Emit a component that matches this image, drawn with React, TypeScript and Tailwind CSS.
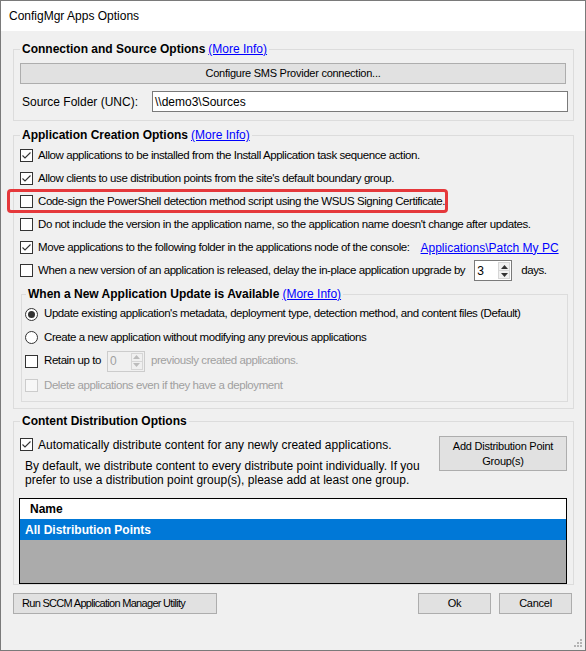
import React from 'react'

// condensed look of the WinForms checkbox / radio captions
const NARROW = 'text-[11.5px] tracking-[-0.42px]'
const BTN_TEXT = 'text-[11px] tracking-[-0.25px]'
const BTN = 'flex items-center justify-center border border-[#adadad] bg-[#e1e1e1] text-black'

function Check({ checked = false, disabled = false }: { checked?: boolean; disabled?: boolean }) {
  return (
    <span
      className={`flex h-[13px] w-[13px] shrink-0 items-center justify-center border ${
        disabled ? 'border-[#cccccc] bg-[#f7f7f7]' : 'border-[#333333] bg-white'
      }`}
    >
      {checked && (
        <svg width="11" height="11" viewBox="0 0 11 11">
          <path d="M1.5 5.5 L4 8 L9.5 2.5" fill="none" stroke="#333333" strokeWidth="1.1" />
        </svg>
      )}
    </span>
  )
}

function Radio({ checked = false }: { checked?: boolean }) {
  return (
    <span className="flex h-[13px] w-[13px] shrink-0 items-center justify-center rounded-full border border-[#333333] bg-white">
      {checked && <span className="h-[7px] w-[7px] rounded-full bg-[#333333]" />}
    </span>
  )
}

function Spin({ value, disabled = false }: { value: string; disabled?: boolean }) {
  const arrow = disabled ? '#bcbcbc' : '#333333'
  return (
    <div
      className={`flex h-[21px] w-[38px] shrink-0 border ${
        disabled ? 'border-[#cccccc] bg-[#f0f0f0] text-[#a0a0a0]' : 'border-[#7a7a7a] bg-white text-black'
      }`}
    >
      <span className="flex flex-1 items-center pl-[2px] text-[12px]">{value}</span>
      <div className="my-[1px] mr-[1px] flex w-[12px] flex-col border border-[#d6d6d6] bg-[#f0f0f0]">
        <span className="flex flex-1 items-center justify-center border-b border-[#d6d6d6]">
          <svg width="7" height="4" viewBox="0 0 7 4">
            <path d="M0 4 L3.5 0 L7 4 Z" fill={arrow} />
          </svg>
        </span>
        <span className="flex flex-1 items-center justify-center">
          <svg width="7" height="4" viewBox="0 0 7 4">
            <path d="M0 0 L7 0 L3.5 4 Z" fill={arrow} />
          </svg>
        </span>
      </div>
    </div>
  )
}

function MoreInfo() {
  return <span className="ml-[3px] font-normal text-[#0000ff] underline">(More Info)</span>
}

function CheckRow({ checked, children }: { checked?: boolean; children: React.ReactNode }) {
  return (
    <div className="flex h-[23px] items-center gap-[5px] whitespace-nowrap pl-[6px]">
      <Check checked={checked} />
      <span className={NARROW}>{children}</span>
    </div>
  )
}

export default function App() {
  return (
    <div className="relative flex h-[651px] w-[586px] flex-col overflow-hidden border border-[#7a7a7a] bg-[#f0f0f0] font-['Liberation_Sans',Arial,sans-serif] text-[12px] text-black">
      {/* title bar */}
      <div className="flex h-[30px] shrink-0 items-center bg-white pl-[8px] text-[12px]">ConfigMgr Apps Options</div>

      <div className="flex flex-col pt-[10px]">
        {/* Connection and Source Options */}
        <fieldset className="ml-[12px] w-[561px] min-w-0 border border-[#dcdcdc] px-0 pb-[8px]">
          <legend className="ml-[6px] px-[2px] text-[12px] leading-[16px] font-bold">
            Connection and Source Options
            <MoreInfo />
          </legend>
          <div className={`${BTN} ${BTN_TEXT} mt-[6px] ml-[6px] h-[21px] w-[546px]`}>Configure SMS Provider connection...</div>
          <div className="mt-[7px] flex h-[21px] items-center">
            <span className="pl-[8px]">Source Folder (UNC):</span>
            <div className="mr-[5px] ml-auto flex h-[21px] w-[416px] items-center border border-[#7a7a7a] bg-white pl-[2px]">
              {'\\\\demo3\\Sources'}
            </div>
          </div>
        </fieldset>

        {/* Application Creation Options */}
        <fieldset className="mt-[6px] ml-[12px] w-[561px] min-w-0 border border-[#dcdcdc] px-0 pb-[6px]">
          <legend className="ml-[6px] px-[2px] text-[12px] leading-[16px] font-bold">
            Application Creation Options
            <MoreInfo />
          </legend>
          <div className="mt-[1px] flex flex-col">
            <CheckRow checked>Allow applications to be installed from the Install Application task sequence action.</CheckRow>
            <CheckRow checked>Allow clients to use distribution points from the site's default boundary group.</CheckRow>
            <div className="relative">
              <CheckRow>Code-sign the PowerShell detection method script using the WSUS Signing Certificate.</CheckRow>
              <span className="absolute top-[-1px] left-[-7px] h-[24px] w-[441px] rounded-[4px] border-[3px] border-[#e5383b]" />
            </div>
            <CheckRow>Do not include the version in the application name, so the application name doesn't change after updates.</CheckRow>
            <div className="flex h-[23px] items-center gap-[5px] whitespace-nowrap pl-[6px]">
              <Check checked />
              <span className={NARROW}>Move applications to the following folder in the applications node of the console:</span>
              <span className="ml-[6px] text-[#0000ff] underline">Applications\Patch My PC</span>
            </div>
            <div className="flex h-[23px] items-center gap-[5px] whitespace-nowrap pl-[6px]">
              <Check />
              <span className={NARROW}>When a new version of an application is released, delay the in-place application upgrade by</span>
              <span className="ml-[4px]">
                <Spin value="3" />
              </span>
              <span className={`${NARROW} ml-[4px]`}>days.</span>
            </div>
          </div>

          {/* When a New Application Update is Available */}
          <fieldset className="mt-[4px] ml-[7px] w-[547px] min-w-0 border border-[#dcdcdc] px-0 pb-[3px]">
            <legend className="ml-[4px] px-[2px] text-[12px] leading-[16px] font-bold">
              When a New Application Update is Available
              <MoreInfo />
            </legend>
            <div className="flex h-[24px] items-center gap-[6px] whitespace-nowrap pl-[3px]">
              <Radio checked />
              <span className={NARROW}>
                Update existing application's metadata, deployment type, detection method, and content files (Default)
              </span>
            </div>
            <div className="flex h-[23px] items-center gap-[6px] whitespace-nowrap pl-[3px]">
              <Radio />
              <span className={NARROW}>Create a new application without modifying any previous applications</span>
            </div>
            <div className="flex h-[24px] items-center gap-[6px] whitespace-nowrap pl-[3px]">
              <Check />
              <span className={NARROW}>Retain up to</span>
              <Spin value="0" disabled />
              <span className={`${NARROW} text-[#a0a0a0]`}>previously created applications.</span>
            </div>
            <div className="flex h-[25px] items-center gap-[6px] whitespace-nowrap pl-[3px]">
              <Check disabled />
              <span className={`${NARROW} text-[#a0a0a0]`}>Delete applications even if they have a deployment</span>
            </div>
          </fieldset>
        </fieldset>

        {/* Content Distribution Options */}
        <fieldset className="mt-[4px] ml-[12px] w-[561px] min-w-0 border border-[#dcdcdc] px-0 pb-0">
          <legend className="ml-[6px] px-[2px] text-[12px] leading-[16px] font-bold">Content Distribution Options</legend>
          <div className="flex items-start">
            <div className="flex flex-col pl-[6px]">
              <div className="mt-[4px] flex h-[23px] items-center gap-[5px] whitespace-nowrap">
                <Check checked />
                <span>Automatically distribute content for any newly created applications.</span>
              </div>
              <p className="mt-[3px] ml-[5px] leading-[14px] whitespace-nowrap">
                By default, we distribute content to every distribute point individually. If you
                <br />
                prefer to use a distribution point group(s), please add at least one group.
              </p>
            </div>
            <div className={`${BTN} ${BTN_TEXT} mt-[7px] mr-[6px] ml-auto h-[35px] w-[128px] flex-col leading-[15px]`}>
              <span>Add Distribution Point</span>
              <span>Group(s)</span>
            </div>
          </div>
          <div className="mt-[11px] ml-[5px] flex h-[86px] w-[548px] flex-col border border-black bg-[#ababab]">
            <div className="flex h-[20px] items-center bg-white pl-[10px] font-bold">Name</div>
            <div className="flex h-[21px] items-center bg-[#0078d7] pl-[5px] font-bold text-white">All Distribution Points</div>
          </div>
        </fieldset>

        {/* dialog buttons */}
        <div className={`${BTN_TEXT} mt-[8px] flex h-[21px] items-stretch whitespace-nowrap px-[12px]`}>
          <div className={`${BTN} w-[204px] justify-start pl-[8px] tracking-[-0.7px]`}>Run SCCM Application Manager Utility</div>
          <div className={`${BTN} ml-auto w-[73px]`}>Ok</div>
          <div className={`${BTN} mr-[1px] ml-[8px] w-[73px]`}>Cancel</div>
        </div>
      </div>

      {/* size grip */}
      <svg className="absolute right-[2px] bottom-[2px]" width="10" height="10" viewBox="0 0 10 10">
        {[
          [8, 2],
          [5, 5],
          [8, 5],
          [2, 8],
          [5, 8],
          [8, 8],
        ].map(([x, y]) => (
          <rect key={`${x}-${y}`} x={x - 1} y={y - 1} width="2" height="2" fill="#b4b4b4" />
        ))}
      </svg>
    </div>
  )
}
